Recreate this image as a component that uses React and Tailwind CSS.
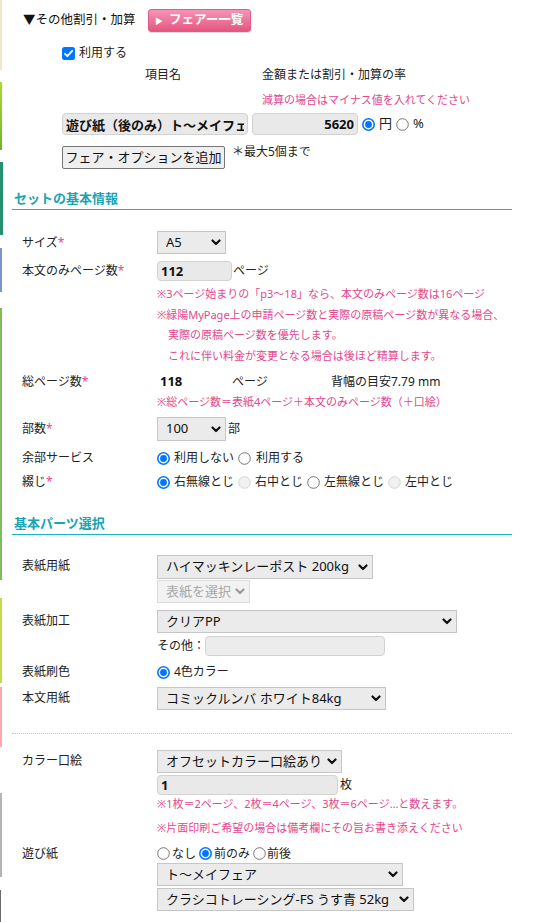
import React from 'react';

const font = "font-['Noto_Sans','Noto_Sans_CJK_JP',sans-serif]";

const Chevron = ({ disabled }) => (
    <svg width="10" height="7" viewBox="0 0 10 7" className="shrink-0">
        <path d="M1.5 1.5 L5 5 L8.5 1.5" fill="none" stroke={disabled ? '#9a9a9a' : '#111'} strokeWidth="2.2" strokeLinecap="round" strokeLinejoin="round" />
    </svg>
);

const Select = ({ value, w, h = 'h-[23px]', disabled }) => (
    <div
        className={`${w} ${h} flex items-center justify-between pl-[8px] pr-[4px] border text-[13px] ${
            disabled ? 'border-[#dcdcdc] bg-[#f2f2f2] text-[#a8a8a8]' : 'border-[#c6c6c6] bg-[#ebebeb] text-[#111]'
        }`}
    >
        <span className="whitespace-nowrap overflow-hidden">{value}</span>
        <Chevron disabled={disabled} />
    </div>
);

const TextBox = ({ value, w, h = 'h-[20px]', right }) => (
    <input
        readOnly
        value={value}
        className={`${w} ${h} px-[3px] rounded-[4px] border border-[#d2d2d2] bg-[#e9e9e9] text-[13px] font-bold text-[#111] outline-none ${right ? 'text-right' : ''}`}
    />
);

const Radio = ({ checked, disabled }) => (
    <svg width="13" height="13" viewBox="0 0 13 13" className="shrink-0">
        {checked ? (
            <>
                <circle cx="6.5" cy="6.5" r="5.7" fill="#fff" stroke="#0075ff" strokeWidth="1.6" />
                <circle cx="6.5" cy="6.5" r="3.4" fill="#0075ff" />
            </>
        ) : (
            <circle cx="6.5" cy="6.5" r="5.8" fill={disabled ? '#f1f1f1' : '#fff'} stroke={disabled ? '#d4d4d4' : '#767676'} strokeWidth="1" />
        )}
    </svg>
);

const Checkbox = () => (
    <svg width="13" height="13" viewBox="0 0 13 13" className="shrink-0">
        <rect x="0" y="0" width="13" height="13" rx="2.5" fill="#0075ff" />
        <path d="M3 6.8 L5.4 9.2 L10.2 3.9" fill="none" stroke="#fff" strokeWidth="1.8" strokeLinecap="round" strokeLinejoin="round" />
    </svg>
);

const Req = () => <span className="text-[#e4478c]">*</span>;

const Field = ({ label, req, h, className = '', children }) => (
    <div className={`flex pl-[10px] ${className}`}>
        <div className={`w-[135px] shrink-0 flex items-center text-[12px] text-[#222] ${h}`}>
            {label}
            {req && <Req />}
        </div>
        <div className="flex flex-col">{children}</div>
    </div>
);

const Note = ({ children, className = '' }) => (
    <div className={`text-[11px] text-[#e4478c] whitespace-nowrap ${className}`}>{children}</div>
);

const Heading = ({ children, className = '' }) => (
    <div className={`w-[500px] pl-[2px] pb-[3px] leading-[16px] border-b border-[#1db3bf] text-[13px] font-bold text-[#1aa3b3] ${className}`}>
        {children}
    </div>
);

const Strips = () => (
    <div className="w-[3px] shrink-0 flex flex-col">
        <div className="h-[70px] w-[2px] bg-[#f1e6cf]" />
        <div className="mt-[12px] h-[68px] w-[2px] bg-gradient-to-b from-[#a6dc2e] to-[#6cb62a]" />
        <div className="mt-[12px] h-[73px] w-[3px] bg-[#23906f]" />
        <div className="mt-[13px] h-[44px] w-[2px] bg-[#7c94c8]" />
        <div className="mt-[16px] h-[272px] w-[2px] bg-[#80bb5e]" />
        <div className="mt-[18px] h-[85px] w-[2px] bg-[#c9d94e]" />
        <div className="mt-[4px] h-[60px] w-[2px] bg-[#f7aaae]" />
        <div className="mt-[46px] h-[84px] w-[2px] bg-[#b4b4b4]" />
        <div className="mt-[13px] h-[32px] w-[1px] bg-[#6a6a6a]" />
    </div>
);

export default function App() {
    return (
        <div className={`w-[541px] min-h-[922px] bg-white flex text-[#222] ${font}`}>
            <Strips />
            <div className="pl-[9px] flex flex-col">
                {/* その他割引・加算 */}
                <div className="pt-[9px] h-[32px] flex items-center pl-[11px]">
                    <span className="text-[12.5px] text-[#111]">▼その他割引・加算</span>
                    <div className="ml-[12px] w-[103px] h-[23px] flex items-center justify-center gap-[6px] rounded-[3px] border border-[#df5c88] bg-gradient-to-b from-[#f593b7] to-[#e4557f] text-white text-[12.5px] font-bold shadow-[0_1px_1px_rgba(0,0,0,0.15)]">
                        <span className="text-[8px]">▶</span>
                        <span>フェアー一覧</span>
                    </div>
                </div>
                <div className="mt-[13px] h-[16px] flex items-center gap-[4px] pl-[50px] text-[12px]">
                    <Checkbox />
                    <span>利用する</span>
                </div>
                <div className="mt-[6px] h-[16px] flex items-center pl-[133px] text-[12px]">
                    <span className="w-[117px]">項目名</span>
                    <span>金額または割引・加算の率</span>
                </div>
                <Note className="mt-[9px] h-[16px] leading-[16px] pl-[250px]">減算の場合はマイナス値を入れてください</Note>
                <div className="mt-[5px] h-[22px] flex items-center pl-[50px] text-[12px]">
                    <TextBox value="遊び紙（後のみ）ト～メイフェア" w="w-[186px]" h="h-[22px]" />
                    <div className="ml-[4px]">
                        <TextBox value="5620" w="w-[106px]" h="h-[22px]" right />
                    </div>
                    <div className="ml-[4px] flex items-center gap-[4px]">
                        <Radio checked />
                        <span className="text-[13px]">円</span>
                        <Radio />
                        <span className="text-[13px]">%</span>
                    </div>
                </div>
                <div className="mt-[11px] h-[23px] flex items-start pl-[50px]">
                    <div className="w-[163px] h-[23px] flex items-center justify-center border border-[#767676] rounded-[2px] bg-[#efefef] text-[13px] text-[#111]">
                        フェア・オプションを追加
                    </div>
                    <span className="ml-[7px] text-[12px] leading-[14px] mt-[-1px]">＊最大5個まで</span>
                </div>

                {/* セットの基本情報 */}
                <Heading className="mt-[21px]">セットの基本情報</Heading>

                <Field label="サイズ" req h="h-[23px]" className="mt-[21px]">
                    <Select value="A5" w="w-[69px]" />
                </Field>

                <Field label="本文のみページ数" req h="h-[20px]" className="mt-[7px]">
                    <div className="flex items-center text-[12px]">
                        <TextBox value="112" w="w-[75px]" />
                        <span className="ml-[1px]">ページ</span>
                    </div>
                    <div className="mt-[3px] leading-[20.5px]">
                        <Note>※3ページ始まりの「p3～18」なら、本文のみページ数は16ページ</Note>
                        <Note>※緑陽MyPage上の申請ページ数と実際の原稿ページ数が異なる場合、</Note>
                        <Note className="pl-[11px]">実際の原稿ページ数を優先します。</Note>
                        <Note className="pl-[11px]">これに伴い料金が変更となる場合は後ほど精算します。</Note>
                    </div>
                </Field>

                <Field label="総ページ数" req h="h-[20px]" className="mt-[6px]">
                    <div className="h-[20px] flex items-center text-[12px]">
                        <span className="w-[75px] pl-[3px] text-[13px] font-bold text-[#111]">118</span>
                        <span className="w-[99px]">ページ</span>
                        <span>背幅の目安7.79 mm</span>
                    </div>
                    <Note className="leading-[20px]">※総ページ数＝表紙4ページ＋本文のみページ数（＋口絵）</Note>
                </Field>

                <Field label="部数" req h="h-[24px]" className="mt-[5px]">
                    <div className="flex items-center text-[12px]">
                        <Select value="100" w="w-[69px]" h="h-[24px]" />
                        <span className="ml-[2px]">部</span>
                    </div>
                </Field>

                <Field label="余部サービス" h="h-[20px]" className="mt-[7px]">
                    <div className="h-[20px] flex items-center text-[12px]">
                        <Radio checked />
                        <span className="ml-[4px]">利用しない</span>
                        <span className="ml-[4px] flex"><Radio /></span>
                        <span className="ml-[5px]">利用する</span>
                    </div>
                </Field>

                <Field label="綴じ" req h="h-[20px]" className="mt-[4px]">
                    <div className="h-[20px] flex items-center text-[12px]">
                        <Radio checked />
                        <span className="ml-[4px]">右無線とじ</span>
                        <span className="ml-[4px] flex"><Radio disabled /></span>
                        <span className="ml-[4px]">右中とじ</span>
                        <span className="ml-[4px] flex"><Radio /></span>
                        <span className="ml-[4px]">左無線とじ</span>
                        <span className="ml-[4px] flex"><Radio disabled /></span>
                        <span className="ml-[4px]">左中とじ</span>
                    </div>
                </Field>

                {/* 基本パーツ選択 */}
                <Heading className="mt-[23px]">基本パーツ選択</Heading>

                <Field label="表紙用紙" h="h-[22px]" className="mt-[20px]">
                    <Select value="ハイマッキンレーポスト 200kg" w="w-[216px]" h="h-[24px]" />
                    <div className="mt-[1px]">
                        <Select value="表紙を選択" w="w-[93px]" disabled />
                    </div>
                </Field>

                <Field label="表紙加工" h="h-[21px]" className="mt-[7px]">
                    <Select value="クリアPP" w="w-[300px]" />
                    <div className="mt-[3px] flex items-center text-[12px]">
                        <span className="w-[48px]">その他：</span>
                        <input readOnly value="" className="w-[180px] h-[20px] rounded-[4px] border border-[#d2d2d2] bg-[#ececec] outline-none" />
                    </div>
                </Field>

                <Field label="表紙刷色" h="h-[20px]" className="mt-[6px]">
                    <div className="h-[20px] flex items-center text-[12px]">
                        <Radio checked />
                        <span className="ml-[4px]">4色カラー</span>
                    </div>
                </Field>

                <Field label="本文用紙" h="h-[21px]" className="mt-[5px]">
                    <Select value="コミックルンバ ホワイト84kg" w="w-[229px]" />
                </Field>

                <div className="mt-[23px] w-[500px] border-t border-dotted border-[#c4c4c4]" />

                <Field label="カラー口絵" h="h-[21px]" className="mt-[16px]">
                    <Select value="オフセットカラー口絵あり" w="w-[185px]" />
                    <div className="mt-[2px] flex items-center text-[12px]">
                        <TextBox value="1" w="w-[181px]" />
                        <span className="ml-[2px]">枚</span>
                    </div>
                    <div className="mt-[-3px] leading-[24px]">
                        <Note>※1枚＝2ページ、2枚＝4ページ、3枚＝6ページ…と数えます。</Note>
                        <Note>※片面印刷ご希望の場合は備考欄にその旨お書き添えください</Note>
                    </div>
                </Field>

                <Field label="遊び紙" h="h-[19px]" className="mt-[4px]">
                    <div className="h-[19px] flex items-center text-[12px]">
                        <Radio />
                        <span className="ml-[2px]">なし</span>
                        <span className="ml-[3px] flex"><Radio checked /></span>
                        <span className="ml-[2px]">前のみ</span>
                        <span className="ml-[3px] flex"><Radio /></span>
                        <span className="ml-[1px]">前後</span>
                    </div>
                    <Select value="ト～メイフェア" w="w-[246px]" />
                    <div className="mt-[2px]">
                        <Select value="クラシコトレーシング-FS うす青 52kg" w="w-[257px]" />
                    </div>
                </Field>
            </div>
        </div>
    );
}
